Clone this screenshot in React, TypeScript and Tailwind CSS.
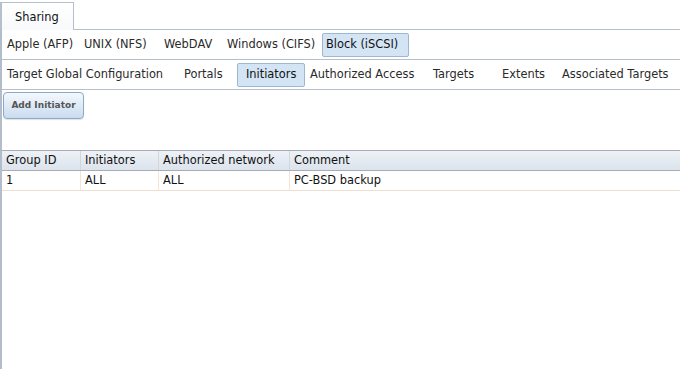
type Tab = { label: string; w: string; pl: string; active?: boolean };

const shareTabs: Tab[] = [
  { label: "Apple (AFP)", w: "w-[77px]", pl: "pl-[4px]" },
  { label: "UNIX (NFS)", w: "w-[80px]", pl: "pl-[4px]" },
  { label: "WebDAV", w: "w-[63px]", pl: "pl-[4px]" },
  { label: "Windows (CIFS)", w: "w-[100px]", pl: "pl-[4px]" },
  { label: "Block (iSCSI)", w: "w-[87px]", pl: "pl-[3px]", active: true },
];

const iscsiTabs: Tab[] = [
  { label: "Target Global Configuration", w: "w-[177px]", pl: "pl-[4px]" },
  { label: "Portals", w: "w-[58px]", pl: "pl-[4px]" },
  { label: "Initiators", w: "w-[68px]", pl: "pl-[8px]", active: true },
  { label: "Authorized Access", w: "w-[123px]", pl: "pl-[4px]" },
  { label: "Targets", w: "w-[69px]", pl: "pl-[4px]" },
  { label: "Extents", w: "w-[60px]", pl: "pl-[4px]" },
  { label: "Associated Targets", w: "w-[120px]", pl: "pl-[4px]" },
];

const TabRow = ({ tabs }: { tabs: Tab[] }) => (
  <div className="h-[30px] flex items-center border-b border-[#b6bfcc]">
    {tabs.map((t) => (
      <div
        key={t.label}
        className={
          t.active
            ? `${t.w} ${t.pl} h-[24px] shrink-0 flex items-center whitespace-nowrap border border-[#9fb6cf] rounded-[2px] bg-[#d3e4f5] text-[#111]`
            : `${t.w} ${t.pl} h-[24px] shrink-0 flex items-center whitespace-nowrap border border-transparent text-[#2a2a2a]`
        }
      >
        {t.label}
      </div>
    ))}
  </div>
);

export default function App() {
  return (
    <div
      className="w-[680px] h-[369px] bg-white overflow-hidden text-[11.4px]"
      style={{ fontFamily: '"DejaVu Sans", Verdana, sans-serif' }}
    >
      {/* top tab strip */}
      <div className="h-[30px] pt-[2px] flex">
        <div className="w-[74px] border-t border-r border-l-2 border-[#b6bfcc] bg-gradient-to-b from-white to-[#f8f9fb] flex items-center pl-[13px] pt-[3px] text-[#111]">
          Sharing
        </div>
        <div className="flex-1 border-b border-[#b6bfcc]" />
      </div>

      <div className="border-l-2 border-[#b3bccb] h-[339px] flex flex-col">
        <TabRow tabs={shareTabs} />
        <TabRow tabs={iscsiTabs} />

        <div className="pt-[2px] pl-[1px]">
          <button className="w-[81px] h-[27px] rounded-[4px] border border-[#8fa8c4] bg-gradient-to-b from-[#f4f8fc] to-[#c9dcf0] text-[9px] font-bold text-[#555] shadow-[0_1px_1px_rgba(0,0,0,0.12)]">
            Add Initiator
          </button>
        </div>

        {/* table */}
        <div className="mt-[31px]">
          <div className="flex h-[21px] border-t border-b border-[#a9adb3] bg-gradient-to-b from-[#eef2f7] to-[#dbe3ec] text-[#111]">
            <div className="w-[79px] pl-[4px] pt-[1px] flex items-center border-r border-[#d3d7dc]">Group ID</div>
            <div className="w-[78px] pl-[4px] pt-[1px] flex items-center border-r border-[#d3d7dc]">Initiators</div>
            <div className="w-[131px] pl-[4px] pt-[1px] flex items-center border-r border-[#d3d7dc]">Authorized network</div>
            <div className="flex-1 pl-[4px] pt-[1px] flex items-center">Comment</div>
          </div>
          <div className="flex h-[20px] border-b border-[#f0dfcf] text-[#111]">
            <div className="w-[79px] pl-[4px] pt-[1px] flex items-center border-r border-[#f3e4d6]">1</div>
            <div className="w-[78px] pl-[4px] pt-[1px] flex items-center border-r border-[#f3e4d6]">ALL</div>
            <div className="w-[131px] pl-[4px] pt-[1px] flex items-center border-r border-[#f3e4d6]">ALL</div>
            <div className="flex-1 pl-[4px] pt-[1px] flex items-center">PC-BSD backup</div>
          </div>
        </div>
      </div>
    </div>
  );
}
